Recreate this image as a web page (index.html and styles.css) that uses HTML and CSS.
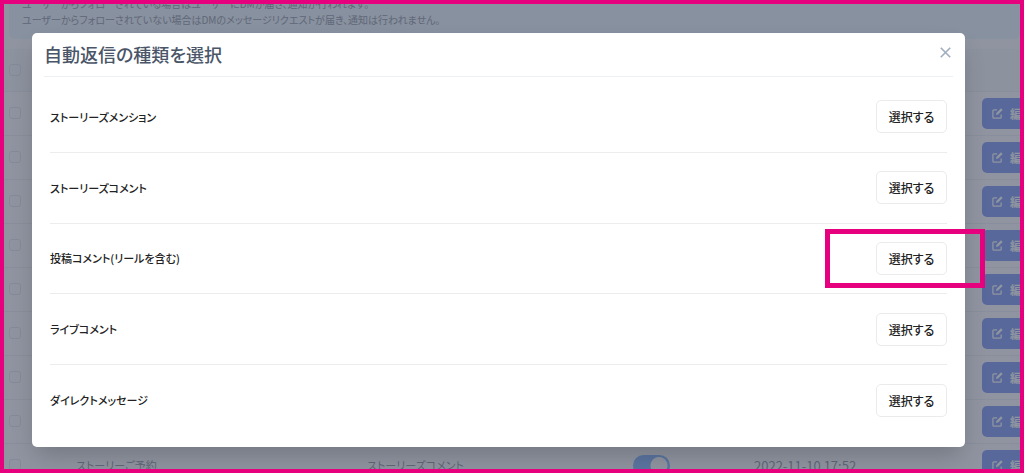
FILE: index.html
```
<!DOCTYPE html>
<html lang="ja">
<head>
    <meta charset="UTF-8">
    <meta name="viewport" content="width=device-width, initial-scale=1.0">
    <title>自動返信の種類を選択</title>
    <link rel="stylesheet" href="styles.css">
</head>
<body>
    <svg class="sprite" width="0" height="0">
        <symbol id="icon-edit" viewBox="0 0 12 12">
            <path d="M5.5 2H2a1 1 0 0 0-1 1v7a1 1 0 0 0 1 1h7a1 1 0 0 0 1-1V7" fill="none" stroke="currentColor" stroke-width="1.4"/>
            <path d="M4.4 7.6l.4-2.2L9.8.4l1.8 1.8-5 5z" fill="currentColor"/>
        </symbol>
    </svg>

    <div class="frame">
        <!-- 背面のページ -->
        <main class="page">
            <div class="notice">
                <p>ユーザーからフォローされている場合はユーザーにDMが届き、通知が行われます。</p>
                <p>ユーザーからフォローされていない場合はDMのメッセージリクエストが届き、通知は行われません。</p>
            </div>
            <table class="reply-table">
                <thead>
                    <tr>
                        <th class="col-check"><input type="checkbox"></th>
                        <th class="col-name"></th>
                        <th class="col-type"></th>
                        <th class="col-status"></th>
                        <th class="col-date"></th>
                        <th class="col-action"></th>
                    </tr>
                </thead>
                <tbody>
                    <tr><td><input type="checkbox"></td><td colspan="4"></td><td><button class="edit-button"><svg><use href="#icon-edit"/></svg>編集</button></td></tr>
                    <tr><td><input type="checkbox"></td><td colspan="4"></td><td><button class="edit-button"><svg><use href="#icon-edit"/></svg>編集</button></td></tr>
                    <tr><td><input type="checkbox"></td><td colspan="4"></td><td><button class="edit-button"><svg><use href="#icon-edit"/></svg>編集</button></td></tr>
                    <tr><td><input type="checkbox"></td><td colspan="4"></td><td><button class="edit-button"><svg><use href="#icon-edit"/></svg>編集</button></td></tr>
                    <tr><td><input type="checkbox"></td><td colspan="4"></td><td><button class="edit-button"><svg><use href="#icon-edit"/></svg>編集</button></td></tr>
                    <tr><td><input type="checkbox"></td><td colspan="4"></td><td><button class="edit-button"><svg><use href="#icon-edit"/></svg>編集</button></td></tr>
                    <tr><td><input type="checkbox"></td><td colspan="4"></td><td><button class="edit-button"><svg><use href="#icon-edit"/></svg>編集</button></td></tr>
                    <tr><td><input type="checkbox"></td><td colspan="4"></td><td><button class="edit-button"><svg><use href="#icon-edit"/></svg>編集</button></td></tr>
                    <tr>
                        <td><input type="checkbox"></td>
                        <td>ストーリーご予約</td>
                        <td>ストーリーズコメント</td>
                        <td><input type="checkbox" class="switch" checked></td>
                        <td class="date">2022-11-10 17:52</td>
                        <td><button class="edit-button"><svg><use href="#icon-edit"/></svg>編集</button></td>
                    </tr>
                </tbody>
            </table>
        </main>

        <div class="overlay"></div>

        <!-- モーダル -->
        <div class="modal" role="dialog" aria-labelledby="modal-title">
            <div class="modal-header">
                <h2 id="modal-title">自動返信の種類を選択</h2>
                <button class="close-button">
                    <svg viewBox="0 0 10 10"><path d="M.7.7l8.6 8.6M9.3.7L.7 9.3"/></svg>
                </button>
            </div>
            <ul class="type-list">
                <li>
                    <span id="type-1">ストーリーズメンション</span>
                    <button class="select-button" aria-describedby="type-1">選択する</button>
                </li>
                <li>
                    <span id="type-2">ストーリーズコメント</span>
                    <button class="select-button" aria-describedby="type-2">選択する</button>
                </li>
                <li class="highlighted">
                    <span id="type-3">投稿コメント(リールを含む)</span>
                    <button class="select-button" aria-describedby="type-3">選択する</button>
                </li>
                <li>
                    <span id="type-4">ライブコメント</span>
                    <button class="select-button" aria-describedby="type-4">選択する</button>
                </li>
                <li>
                    <span id="type-5">ダイレクトメッセージ</span>
                    <button class="select-button" aria-describedby="type-5">選択する</button>
                </li>
            </ul>
        </div>
    </div>
</body>
</html>
```
FILE: styles.css
```
* {
    margin: 0;
    padding: 0;
    box-sizing: border-box;
}

body {
    background: #fff;
    color: #222;
    font-family: "Noto Sans CJK JP", sans-serif;
    font-size: 11px;
    font-feature-settings: "palt";
}

button {
    font: inherit;
    font-feature-settings: inherit;
    cursor: pointer;
}

.sprite {
    position: absolute;
}

.frame {
    position: relative;
    height: calc(100vh - 2px);
    border: 4px solid #e6007e;
    overflow: hidden;
}

/* 背面のページ */
.page {
    margin-top: -12px;
}

.notice {
    margin: 0 0 10px 5px;
    padding: 4px 13px 11px;
    border-radius: 6px;
    background: #f0f8fc;
    color: #a1a5ae;
    font-size: 10px;
    line-height: 16px;
}

.reply-table {
    width: calc(100% + 56px);
    table-layout: fixed;
    border-collapse: collapse;
    color: #a0a5ae;
}

.reply-table th {
    height: 42px;
    background: #fafafd;
    border-bottom: 1px solid #f2f3f7;
}

.reply-table td {
    height: 44px;
    border-bottom: 1px solid #f2f3f7;
    white-space: nowrap;
}

.reply-table th:first-child,
.reply-table td:first-child {
    padding-left: 5px;
    text-align: left;
}

.reply-table .date {
    font-size: 13px;
}

.col-check { width: 72px; }
.col-type { width: 266px; }
.col-status { width: 121px; }
.col-date { width: 228px; }
.col-action { width: 94px; }

.reply-table input {
    display: block;
    appearance: none;
    width: 12px;
    height: 12px;
    border: 1px solid #e6eaf2;
    border-radius: 3px;
}

.reply-table .switch {
    width: 37px;
    height: 21px;
    border: none;
    border-radius: 11px;
    background: radial-gradient(circle at 26px 50%, #fff 8px, #97c0ff 9px);
}

.edit-button {
    display: flex;
    align-items: center;
    gap: 7px;
    width: 80px;
    height: 31px;
    padding-left: 10px;
    border: none;
    border-radius: 5px;
    background: #91a7f2;
    color: #fff;
    font-size: 12px;
    font-weight: 700;
}

.edit-button svg {
    flex: none;
    width: 11px;
    height: 11px;
}

.overlay {
    position: absolute;
    inset: 0;
    background: rgba(31, 41, 65, 0.5);
}

/* モーダル */
.modal {
    position: absolute;
    inset: 29px 55px 22px 28px;
    display: flex;
    flex-direction: column;
    padding: 0 12px 12px;
    border-radius: 5px;
    background: #fff;
    box-shadow: 0 12px 24px -4px rgba(0, 0, 0, 0.2);
}

.modal-header {
    display: flex;
    align-items: center;
    justify-content: space-between;
    height: 44px;
    padding-bottom: 2px;
    border-bottom: 1px solid #edf0f2;
}

.modal-header h2 {
    color: #4a5568;
    font-size: 18px;
    font-weight: 500;
}

.close-button {
    padding: 0 2px 2px;
    border: none;
    background: none;
}

.close-button svg {
    display: block;
    width: 11px;
    height: 11px;
    fill: none;
    stroke: #a0aec0;
    stroke-width: 1.5;
}

.type-list {
    display: flex;
    flex: 1;
    flex-direction: column;
    padding: 5px 6px 0;
    list-style: none;
}

.type-list li {
    position: relative;
    display: flex;
    flex: 1;
    align-items: center;
    justify-content: space-between;
    border-bottom: 1px solid #ececec;
    font-weight: 500;
}

.type-list li:last-child {
    border-bottom: none;
}

.select-button {
    width: 71px;
    height: 33px;
    border: 1px solid #ebebeb;
    border-radius: 5px;
    background: #fff;
    color: #222;
    font-size: 12px;
    font-weight: 500;
}

/* 強調枠 */
.highlighted::after {
    content: "";
    position: absolute;
    right: -38px;
    box-sizing: border-box;
    width: 160px;
    height: 59px;
    border: 5px solid #e6007e;
    pointer-events: none;
}
```
